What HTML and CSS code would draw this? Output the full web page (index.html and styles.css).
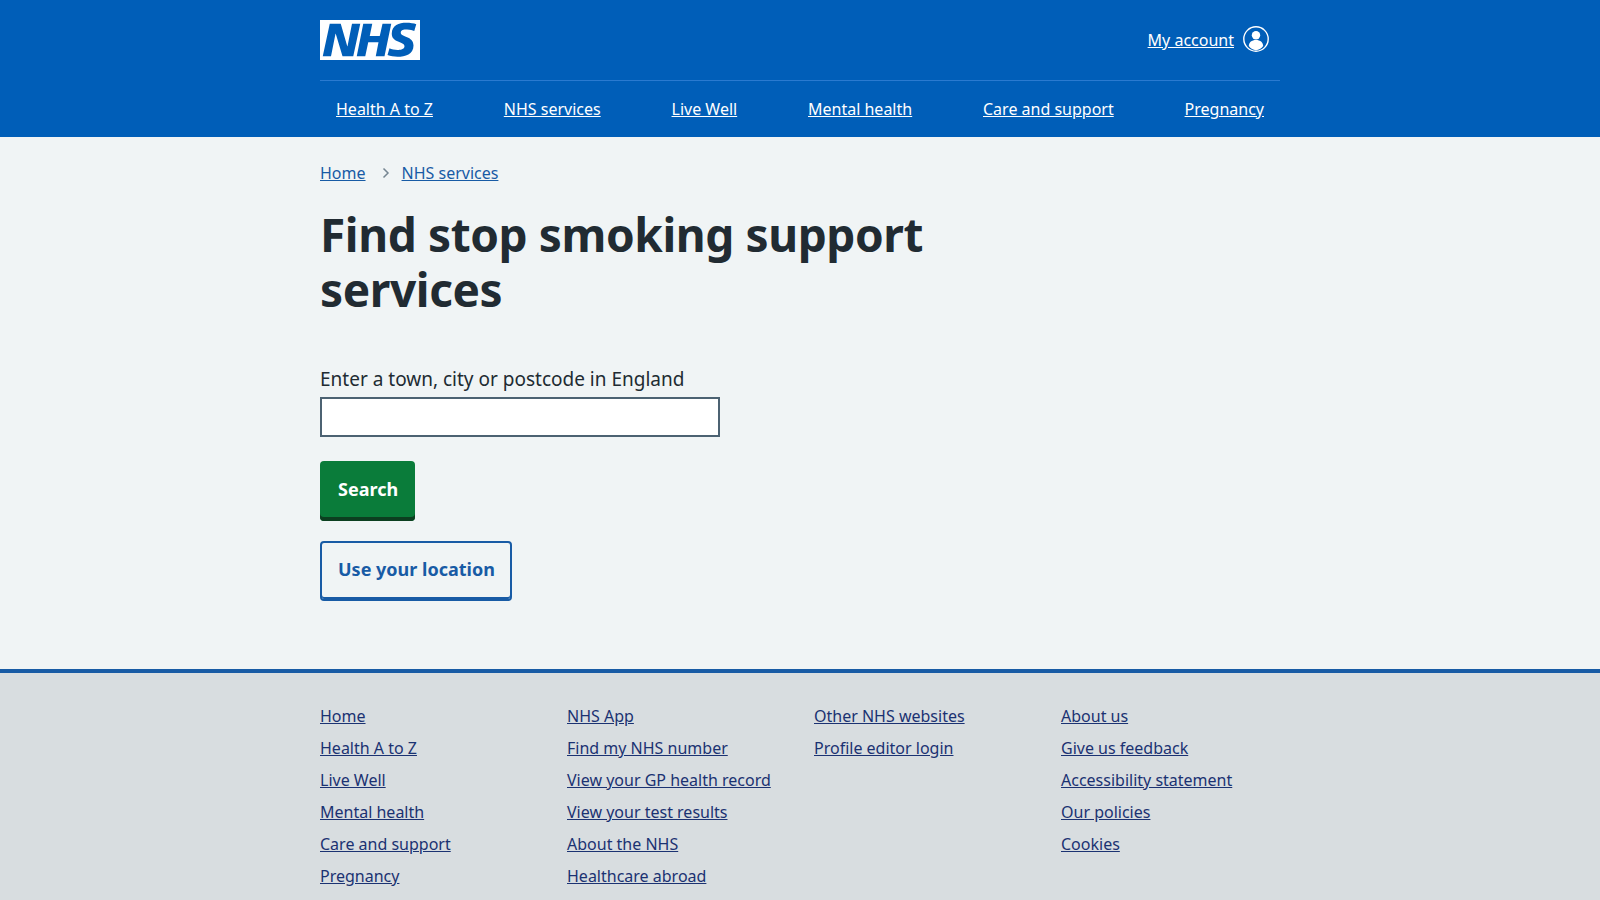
FILE: index.html
```html
<!DOCTYPE html>
<html lang="en">
<head>
<meta charset="utf-8">
<title>Find stop smoking support services</title>
<link rel="stylesheet" href="styles.css">
</head>
<body>
<header class="header">
  <div class="wrap">
    <div class="header-top">
      <a class="logo" href="#" aria-label="NHS homepage">
        <svg viewBox="0 0 40 16" width="100" height="40"><path fill="#fff" d="M0 0h40v16H0z"/><path fill="#005eb8" d="M3.9 1.5h4.4l2.6 9h.1l1.8-9h3.3l-2.8 13H9l-2.7-9h-.1l-1.8 9H1.1M17.3 1.5h3.6l-1 4.9h4L25 1.5h3.5l-2.7 13h-3.5l1.1-5.6h-4.1l-1.2 5.6h-3.4M37.7 4.4c-.7-.3-1.6-.6-2.9-.6-1.4 0-2.5.2-2.5 1.3 0 1.8 5.1 1.2 5.1 5.1 0 3.6-3.3 4.5-6.4 4.5-1.3 0-2.9-.3-4-.7l.8-2.7c.7.4 2.1.7 3.2.7s2.8-.2 2.8-1.5c0-2.1-5.1-1.3-5.1-5 0-3.4 2.9-4.4 5.8-4.4 1.6 0 3.1.2 4 .6"/></svg>
      </a>
      <a class="account" href="#">
        <span class="account-text">My account</span>
        <svg viewBox="0 0 26 26" width="26" height="26"><circle cx="13" cy="13" r="12.2" fill="none" stroke="#fff" stroke-width="1.4"/><circle cx="13" cy="9.3" r="4.2" fill="#fff"/><path fill="#fff" d="M5.8 20c.2-3.800 2.900-6 7.200-6s7 2.200 7.200 6c-1.800 2.300-4.400 4.200-7.200 4.200s-5.400-1.900-7.200-4.200z"/></svg>
      </a>
    </div>
    <nav class="nav">
      <a href="#">Health A to Z</a>
      <a href="#">NHS services</a>
      <a href="#">Live Well</a>
      <a href="#">Mental health</a>
      <a href="#">Care and support</a>
      <a href="#">Pregnancy</a>
    </nav>
  </div>
</header>
<main class="main">
  <div class="wrap">
    <nav class="crumbs">
      <a href="#">Home</a>
      <svg class="chevron" viewBox="0 0 8 12" width="8" height="12"><path d="M1.5 1.5 6 6l-4.500 4.500" fill="none" stroke="#768692" stroke-width="1.500"/></svg>
      <a href="#">NHS services</a>
    </nav>
    <h1 class="title">Find stop smoking support services</h1>
    <form class="form">
      <label class="label" for="loc">Enter a town, city or postcode in England</label>
      <input class="input" id="loc" type="text">
      <button class="btn btn-primary" type="button">Search</button>
      <button class="btn btn-secondary" type="button">Use your location</button>
    </form>
  </div>
</main>
<footer class="footer">
  <div class="wrap footer-grid">
    <ul>
      <li><a href="#">Home</a></li>
      <li><a href="#">Health A to Z</a></li>
      <li><a href="#">Live Well</a></li>
      <li><a href="#">Mental health</a></li>
      <li><a href="#">Care and support</a></li>
      <li><a href="#">Pregnancy</a></li>
    </ul>
    <ul>
      <li><a href="#">NHS App</a></li>
      <li><a href="#">Find my NHS number</a></li>
      <li><a href="#">View your GP health record</a></li>
      <li><a href="#">View your test results</a></li>
      <li><a href="#">About the NHS</a></li>
      <li><a href="#">Healthcare abroad</a></li>
    </ul>
    <ul>
      <li><a href="#">Other NHS websites</a></li>
      <li><a href="#">Profile editor login</a></li>
    </ul>
    <ul>
      <li><a href="#">About us</a></li>
      <li><a href="#">Give us feedback</a></li>
      <li><a href="#">Accessibility statement</a></li>
      <li><a href="#">Our policies</a></li>
      <li><a href="#">Cookies</a></li>
    </ul>
  </div>
</footer>
</body>
</html>
```
FILE: styles.css
```css
* { box-sizing: border-box; }
html, body { margin: 0; height: 100%; }
body {
  font-family: "Noto Sans", "Liberation Sans", sans-serif;
  font-size: 16px;
  line-height: 24px;
  color: #212b32;
  background: #f0f4f5;
  overflow: hidden;
}
.wrap { width: 960px; margin: 0 auto; }
.header { background: #005eb8; height: 137px; }
.header a { color: #fff; }
.header-top {
  display: flex;
  justify-content: space-between;
  align-items: flex-start;
  height: 81px;
  padding-top: 20px;
  border-bottom: 1px solid #2a7ad0;
}
.logo { display: block; height: 40px; }
.logo svg { display: block; }
.account { display: flex; align-items: center; gap: 9px; padding: 6px 11px 0 0; }
.account-text { position: relative; top: 1px; }
.nav { display: flex; justify-content: space-between; padding: 16px 16px 0; }
.main { height: 532px; }
.main a { color: #185ba5; }
.crumbs { display: flex; align-items: center; padding-top: 24px; }
.chevron { margin: 0 12px 0 16px; }
.title {
  width: 640px;
  margin: 22px 0 0;
  font-size: 46px;
  letter-spacing: -0.4px;
  line-height: 55px;
  font-weight: 700;
}
.form { display: flex; flex-direction: column; align-items: flex-start; margin-top: 48px; }
.label { font-size: 19px; line-height: 28px; margin-bottom: 4px; }
.input {
  display: block;
  width: 400px;
  height: 40px;
  border: 2px solid #4c6272;
  background: #fff;
  margin-bottom: 24px;
}
.btn {
  font: 700 18px/28px "Noto Sans", "Liberation Sans", sans-serif;
  height: 60px;
  padding: 0 17px 4px 18px;
  border-radius: 4px;
  margin-bottom: 20px;
}
.btn-primary { background: #0a7c3a; color: #fff; border: 0; box-shadow: inset 0 -4px 0 #0c3f20; }
.btn-secondary { background: transparent; color: #185ba5; border: 2px solid #185ba5; padding: 0 15px 4px 16px; box-shadow: inset 0 -2px 0 #185ba5; }
.footer { background: #d8dde0; border-top: 4px solid #185ba5; height: 231px; padding-top: 27px; }
.footer-grid { display: grid; grid-template-columns: repeat(4, 247px); width: 960px; }
.footer ul { list-style: none; margin: 0; padding: 0; }
.footer li { height: 32px; line-height: 33px; }
.footer a { color: #1b3272; }
```
